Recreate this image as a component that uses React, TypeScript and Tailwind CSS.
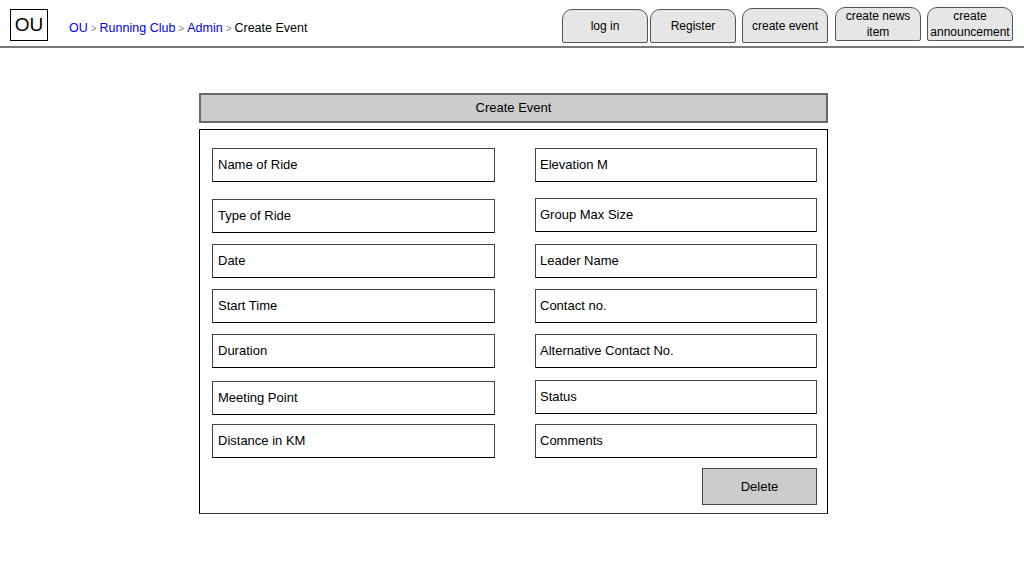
import React from "react";

const left = ["Name of Ride", "Type of Ride", "Date", "Start Time", "Duration", "Meeting Point", "Distance in KM"];
const right = ["Elevation M", "Group Max Size", "Leader Name", "Contact no.", "Alternative Contact No.", "Status", "Comments"];
const leftTops = [148, 199, 244, 289, 334, 381, 424];
const rightTops = [148, 198, 244, 289, 334, 380, 424];

function Field({ label, mt, pl }: { label: string; mt: number; pl: string }) {
  return (
    <div
      className={`h-[34px] border border-[#444] border-b-black border-b-[1.5px] flex items-center ${pl} text-[13px] text-black bg-white shrink-0`}
      style={{ marginTop: mt }}
    >
      {label}
    </div>
  );
}

function Tab({ children, top, h }: { children: React.ReactNode; top: string; h: string }) {
  return (
    <div
      className={`w-[86px] ${top} ${h} bg-[#e6e6e6] border border-[#555] rounded-t-[10px] rounded-b-[2px] flex items-center justify-center text-center text-[12px] leading-[16px] text-black whitespace-nowrap`}
    >
      {children}
    </div>
  );
}

export default function App() {
  const gaps = (tops: number[]) => tops.map((t, i) => (i === 0 ? 18 : t - tops[i - 1] - 34));
  const lm = gaps(leftTops);
  const rm = gaps(rightTops);
  return (
    <div className="w-[1024px] h-[578px] bg-white relative overflow-hidden" style={{ fontFamily: '"Liberation Sans", Arial, sans-serif' }}>
      <div className="h-[48px] border-b-2 border-[#777] flex items-start">
        <div className="ml-[10px] mt-[9px] w-[38px] h-[32px] border border-black flex items-center justify-center text-[19px] text-black">OU</div>
        <div className="ml-[21px] mt-[19px] text-[12.5px] flex items-center">
          <span className="text-[#0000ee]">OU</span>
          <span className="text-[#888] text-[10px] mx-[3px]">&gt;</span>
          <span className="text-[#0000ee]">Running Club</span>
          <span className="text-[#888] text-[10px] mx-[3px]">&gt;</span>
          <span className="text-[#0000ee]">Admin</span>
          <span className="text-[#888] text-[10px] mx-[3px]">&gt;</span>
          <span className="text-black">Create Event</span>
        </div>
        <div className="ml-auto mr-[11px] flex items-start">
          <Tab top="mt-[9px]" h="h-[34px]">log in</Tab>
          <div className="w-[2px]" />
          <Tab top="mt-[9px]" h="h-[34px]">Register</Tab>
          <div className="w-[6px]" />
          <Tab top="mt-[8px]" h="h-[35px]">create event</Tab>
          <div className="w-[7px]" />
          <Tab top="mt-[7px]" h="h-[34px]">create news<br />item</Tab>
          <div className="w-[6px]" />
          <Tab top="mt-[7px]" h="h-[34px]">create<br />announcement</Tab>
        </div>
      </div>

      <div className="ml-[199px] mt-[45px] w-[629px]">
        <div className="h-[30px] bg-[#cccccc] border-2 border-[#6a6a6a] flex items-center justify-center text-[13px] text-black">
          Create Event
        </div>
        <div className="mt-[6px] h-[385px] border border-black border-b-[#333]">
          <div className="flex pl-[12px]">
            <div className="w-[283px] flex flex-col">
              {left.map((l, i) => (
                <Field key={l} label={l} mt={lm[i]} pl="pl-[5px]" />
              ))}
            </div>
            <div className="ml-[40px] w-[282px] flex flex-col">
              {right.map((l, i) => (
                <Field key={l} label={l} mt={rm[i]} pl="pl-[4px]" />
              ))}
              <div className="mt-[10px] self-end w-[115px] h-[37px] bg-[#cccccc] border border-[#444] flex items-center justify-center text-[13px] text-black">
                Delete
              </div>
            </div>
          </div>
        </div>
      </div>
    </div>
  );
}
